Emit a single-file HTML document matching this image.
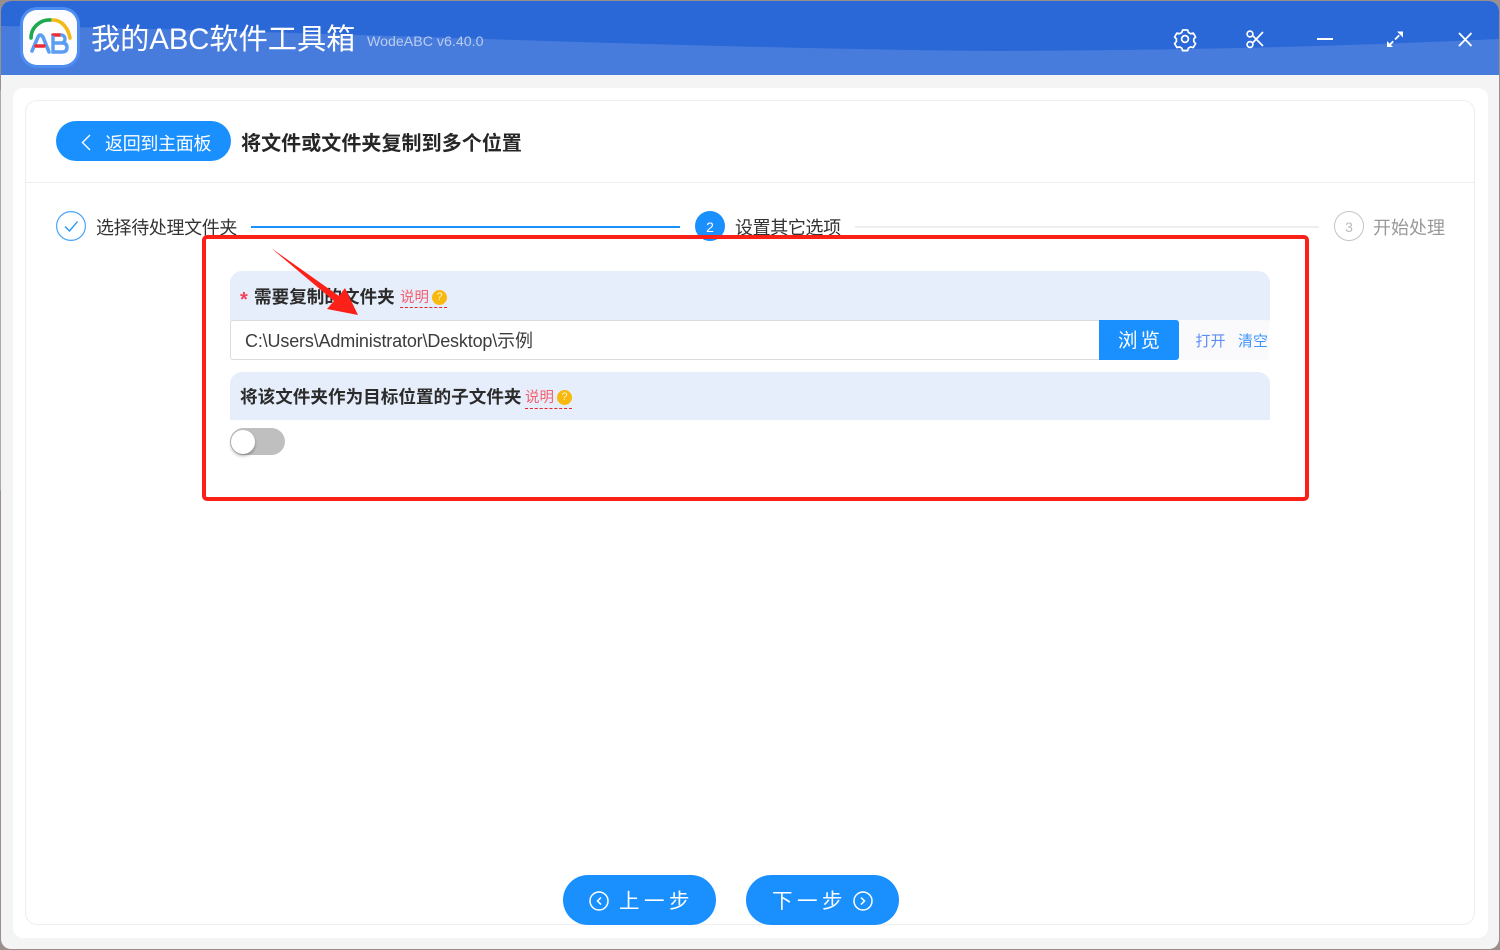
<!DOCTYPE html>
<html lang="zh"><head><meta charset="utf-8">
<style>
*{box-sizing:border-box}
html,body{margin:0;padding:0;width:1500px;height:950px;overflow:hidden;background:#9a8f8c;font-family:"Liberation Sans","Noto Sans CJK SC",sans-serif}
.a{position:absolute;white-space:nowrap}
#win{position:absolute;left:1px;top:1px;width:1498px;height:948px;border-radius:10px;background:#f4f4f4;overflow:hidden}
</style></head><body>
<div class="a" style="left:0;top:90px;width:1px;height:400px;background:#aaa"></div>
<div id="win"></div>
<svg class="a" style="left:1px;top:1px" width="1498" height="74" viewBox="1 1 1498 74">
<defs><clipPath id="c"><path d="M1 11a10 10 0 0 1 10-10h1478a10 10 0 0 1 10 10v64H1z"/></clipPath></defs>
<g clip-path="url(#c)"><rect x="1" y="1" width="1498" height="74" fill="#2a67d7"/>
<path d="M1 26C300 30 650 48 1000 51C1200 50 1350 46 1499 39V75H1z" fill="#487cdc"/></g></svg>
<!-- logo -->
<div class="a" style="left:20px;top:7px;width:60px;height:61px;border-radius:17px;background:#4d8cf0"></div>
<div class="a" style="left:23px;top:10px;width:54px;height:55px;border-radius:14px;background:#fdfdff"></div>
<svg class="a" style="left:20px;top:7px" width="60" height="61" viewBox="20 7 60 61" fill="none" stroke-linecap="round">
<path d="M31 38C31 27 41 19 51 20" stroke="#1fa84f" stroke-width="3.6"/>
<path d="M53 20C61 20 68 27 70 38" stroke="#f5b916" stroke-width="3.6"/>
<path d="M32 51L38 37Q40 33 43 37L49 52" stroke="#5b9df2" stroke-width="3.6"/>
<path d="M36 46H44" stroke="#ee2b33" stroke-width="3.4"/>
<path d="M53 35H60" stroke="#ee2b33" stroke-width="3.6"/>
<path d="M53 43H62" stroke="#f5b916" stroke-width="1"/>
<path d="M53 37V52H62Q67 52 67 47.500Q67 43 62 43H54M62 43Q65 42 65 39Q65 36 62 35" stroke="#5b9df2" stroke-width="3.4"/>
</svg>
<div class="a" style="left:91px;top:20px;font-size:29.200px;line-height:40px;color:#fff">我的ABC软件工具箱</div>
<div class="a" style="left:367px;top:32px;font-size:14.200px;line-height:20px;color:#b9ccf0">WodeABC v6.40.0</div>
<!-- window icons -->
<svg class="a" style="left:1170px;top:24px" width="310" height="30" viewBox="1170 24 310 30" fill="none" stroke="#fff">
<path stroke-width="1.700" stroke-linejoin="round" d="M1182.600 30.500h5l.8 2.500 2.300 1.200 2.600-.6 2.300 3.900-1.800 2 0 2.600 1.800 2-2.300 3.900-2.600-.6-2.300 1.200-.8 2.500h-5l-.8-2.500-2.300-1.200-2.600.6-2.300-3.900 1.800-2 0-2.600-1.800-2 2.300-3.900 2.600.6 2.300-1.200z" transform="translate(0 -.500)"/>
<circle cx="1185" cy="39" r="3.400" stroke-width="1.700"/>
<circle cx="1250" cy="34" r="2.900" stroke-width="1.700"/><circle cx="1250" cy="44.500" r="2.900" stroke-width="1.700"/>
<path stroke-width="1.700" d="M1252.500 35.500L1263 46M1252.500 43L1263 32"/>
<path stroke-width="2" d="M1317 39h16"/>
<path stroke-width="1.800" d="M1389 45.500L1401 33.500" stroke-dasharray="6 2.500 6"/>
<path fill="#fff" stroke="none" d="M1403 31.500v6l-6-6zM1387 47v-6l6 6z"/>
<path stroke-width="1.800" d="M1459 33L1471.500 46M1471.500 33L1459 46"/>
</svg>
<!-- panels -->
<div class="a" style="left:13px;top:88px;width:1475px;height:850px;border-radius:10px;background:#fff"></div>
<div class="a" style="left:25px;top:100px;width:1450px;height:825px;border:1px solid #eee;border-radius:12px"></div>
<div class="a" style="left:26px;top:182px;width:1448px;height:1px;background:#eee"></div>
<!-- back -->
<div class="a" style="left:56px;top:121px;width:175px;height:40px;border-radius:20px;background:#1a90ff"></div>
<svg class="a" style="left:78px;top:133px" width="16" height="20" fill="none" stroke="#fff" stroke-width="1.400"><path d="M12 2L4.500 9.500l7.500 7.500"/></svg>
<div class="a" style="left:105px;top:132px;font-size:18px;line-height:24px;color:#fff;letter-spacing:-.3px">返回到主面板</div>
<div class="a" style="left:241px;top:131px;font-size:20px;line-height:27px;font-weight:700;color:#262626;letter-spacing:.07px">将文件或文件夹复制到多个位置</div>
<!-- steps -->
<svg class="a" style="left:56px;top:211px" width="30" height="30" fill="none"><circle cx="15" cy="15" r="14.400" stroke="#4aa3fb" stroke-width="1.200"/><path d="M9 15.500L13.500 20L21.500 10.500" stroke="#1a90ff" stroke-width="1.300"/></svg>
<div class="a" style="left:96px;top:216px;font-size:18px;line-height:24px;color:#333;letter-spacing:-.38px">选择待处理文件夹</div>
<div class="a" style="left:251px;top:226px;width:429px;height:2px;background:#1a90ff"></div>
<div class="a" style="left:695px;top:211px;width:30px;height:30px;border-radius:50%;background:#1a90ff;color:#fff;font-size:14px;line-height:32px;text-align:center">2</div>
<div class="a" style="left:735px;top:216px;font-size:18px;line-height:24px;color:#333;letter-spacing:-.38px">设置其它选项</div>
<div class="a" style="left:855px;top:226px;width:464px;height:2px;background:#eee"></div>
<div class="a" style="left:1334px;top:211px;width:30px;height:30px;border-radius:50%;border:1px solid #c4c4c4;color:#bbb;font-size:14px;line-height:30px;text-align:center">3</div>
<div class="a" style="left:1373px;top:216px;font-size:18px;line-height:24px;color:#999">开始处理</div>
<!-- section 1 -->
<div class="a" style="left:230px;top:271px;width:1040px;height:50px;background:#e7eefb;border-radius:12px 12px 0 0"></div>
<div class="a" style="left:240px;top:288px;font-size:20px;line-height:24px;font-weight:700;color:#f5405a">*</div>
<div class="a" style="left:254px;top:285px;font-size:17.600px;line-height:24px;font-weight:700;color:#2b2b2b">需要复制的文件夹</div>
<div class="a" style="left:400px;top:288px;width:47px;height:20px;border-bottom:1px dashed #e8232b;font-size:14.500px;line-height:20px;color:#f4606f">说明</div>
<div class="a" style="left:432px;top:290px;width:15px;height:15px;border-radius:50%;background:#f7b90e;color:#fff3c9;font-size:11px;line-height:15px;text-align:center">?</div>
<div class="a" style="left:230px;top:320px;width:870px;height:40px;background:#fff;border:1px solid #dcdcdc;border-radius:3px 0 0 3px;padding-left:14px;font-size:18px;line-height:40px;color:#3c3c3c;letter-spacing:-.16px">C:\Users\Administrator\Desktop\示例</div>
<div class="a" style="left:1099px;top:320px;width:80px;height:40px;background:#1a90ff;border-radius:0 3px 3px 0;color:#fff;font-size:19.500px;line-height:42px;text-align:center;letter-spacing:3px;padding-left:3px">浏览</div>
<div class="a" style="left:1179px;top:320px;width:90px;height:40px;background:#fafafc"></div>
<div class="a" style="left:1195.500px;top:332px;font-size:15px;line-height:20px;color:#5d8ef5">打开</div>
<div class="a" style="left:1238px;top:332px;font-size:15px;line-height:20px;color:#3f95fb">清空</div>
<!-- section 2 -->
<div class="a" style="left:230px;top:372px;width:1040px;height:48px;background:#e7eefb;border-radius:12px 12px 0 0"></div>
<div class="a" style="left:240px;top:385px;font-size:17.600px;line-height:24px;font-weight:700;color:#2b2b2b">将该文件夹作为目标位置的子文件夹</div>
<div class="a" style="left:525px;top:388px;width:47px;height:21px;border-bottom:1px dashed #e8232b;font-size:14.500px;line-height:20px;color:#f4606f">说明</div>
<div class="a" style="left:557px;top:390px;width:15px;height:15px;border-radius:50%;background:#f7b90e;color:#fff3c9;font-size:11px;line-height:15px;text-align:center">?</div>
<div class="a" style="left:230px;top:428px;width:55px;height:27px;border-radius:14px;background:#bfbfbf"></div>
<div class="a" style="left:231px;top:429.500px;width:24px;height:24px;border-radius:50%;background:#fff;box-shadow:0 2px 3px rgba(0,0,0,.3)"></div>
<!-- annotation -->
<div class="a" style="left:202px;top:235px;width:1107px;height:266px;border:4px solid #fb2018;border-radius:5px"></div>
<svg class="a" style="left:265px;top:243px" width="100" height="80"><path d="M6 5L74 53L80 45L93 72L62 66L69 58z" fill="#fb2018"/></svg>
<!-- bottom buttons -->
<div class="a" style="left:563px;top:875px;width:153px;height:50px;border-radius:25px;background:#1a90ff"></div>
<svg class="a" style="left:588px;top:890px" width="22" height="22" fill="none" stroke="#fff" stroke-width="1.500"><circle cx="11" cy="11" r="9"/><path d="M13 7.500L9.500 11L13 14.500"/></svg>
<div class="a" style="left:619px;top:888px;font-size:20.500px;line-height:27px;color:#fff;letter-spacing:4.500px">上一步</div>
<div class="a" style="left:746px;top:875px;width:153px;height:50px;border-radius:25px;background:#1a90ff"></div>
<div class="a" style="left:772px;top:888px;font-size:20.500px;line-height:27px;color:#fff;letter-spacing:4.500px">下一步</div>
<svg class="a" style="left:852px;top:890px" width="22" height="22" fill="none" stroke="#fff" stroke-width="1.500"><circle cx="11" cy="11" r="9"/><path d="M9 7.500L12.500 11L9 14.500"/></svg>
</body></html>
